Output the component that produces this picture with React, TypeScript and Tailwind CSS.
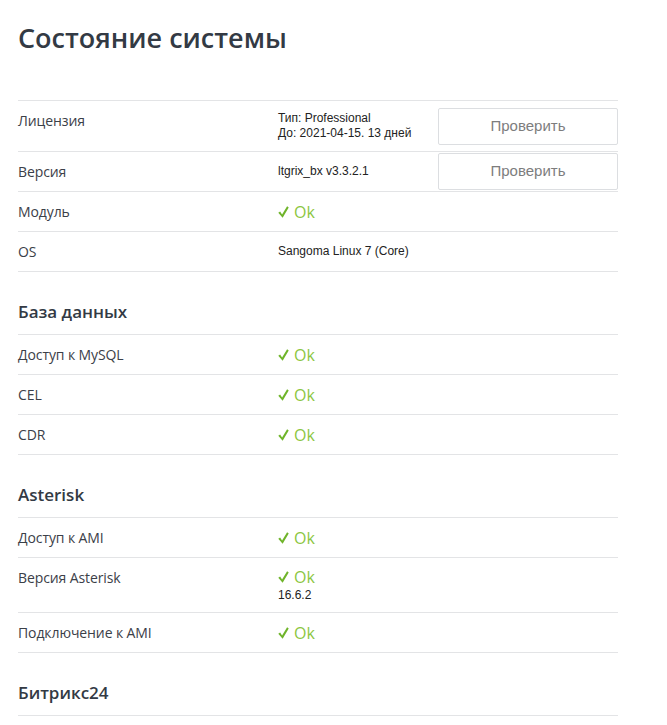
import React from "react";

const labelFont = { fontFamily: '"Open Sans", "Noto Sans", sans-serif' };

function Check() {
  return (
    <svg width="11" height="12" viewBox="0 0 10 11" className="mr-[5px] shrink-0">
      <path d="M0.2 6.3 L1.9 5.1 L3.7 7.7 L8.3 0.3 L9.8 1.3 L4.2 10.7 Z" fill="#6fb42a" />
    </svg>
  );
}

function Ok() {
  return (
    <div className="flex items-center h-5 text-[16px] leading-5 text-[#8cc63f]" style={labelFont}>
      <Check />
      <span>Ok</span>
    </div>
  );
}

function Row({
  label,
  children,
  button,
  valueClass = "py-[9px]",
}: {
  label: string;
  children: React.ReactNode;
  button?: boolean;
  valueClass?: string;
}) {
  return (
    <div className="flex min-h-[40px] border-b border-[#e3e4e6]">
      <div
        className="w-[260px] shrink-0 pt-[10px] pb-[9px] text-[14px] leading-5 text-[#3b4048] tracking-[-0.1px]"
        style={labelFont}
      >
        {label}
      </div>
      <div className={`w-[160px] shrink-0 self-center ${valueClass}`}>{children}</div>
      {button && (
        <div className="w-[180px] shrink-0 self-center">
          <button className="w-full h-[37px] border border-[#dcdee1] rounded-[2px] bg-white text-[15px] text-[#7d7d7d] font-['Liberation_Sans',Arial,sans-serif]">
            Проверить
          </button>
        </div>
      )}
    </div>
  );
}

function Val({ children }: { children: React.ReactNode }) {
  return (
    <div className="text-[12px] leading-[15px] text-[#222] font-['Liberation_Sans',Arial,sans-serif]">
      {children}
    </div>
  );
}

function Heading({ children }: { children: React.ReactNode }) {
  return (
    <div
      className="pt-[28px] pb-[10px] text-[17px] leading-6 font-semibold text-[#333a44] border-b border-[#e3e4e6]"
      style={labelFont}
    >
      {children}
    </div>
  );
}

export default function App() {
  return (
    <div className="bg-white min-h-[725px] pl-[18px]">
      <div className="w-[600px]">
        <h1
          className="pt-[20px] text-[27px] leading-[36px] font-semibold text-[#333a44]"
          style={labelFont}
        >
          Состояние системы
        </h1>
        <div className="mt-[44px] border-t border-[#e3e4e6]">
          <Row label="Лицензия" button valueClass="py-[10px]">
            <Val>
              Тип: Professional
              <br />
              До: 2021-04-15. 13 дней
            </Val>
          </Row>
          <Row label="Версия" button>
            <Val>ltgrix_bx v3.3.2.1</Val>
          </Row>
          <Row label="Модуль">
            <Ok />
          </Row>
          <Row label="OS">
            <Val>Sangoma Linux 7 (Core)</Val>
          </Row>
        </div>
        <Heading>База данных</Heading>
        <Row label="Доступ к MySQL">
          <Ok />
        </Row>
        <Row label="CEL">
          <Ok />
        </Row>
        <Row label="CDR">
          <Ok />
        </Row>
        <Heading>Asterisk</Heading>
        <Row label="Доступ к AMI">
          <Ok />
        </Row>
        <Row label="Версия Asterisk">
          <Ok />
          <div className="text-[12px] leading-4 text-[#222] font-['Liberation_Sans',Arial,sans-serif]">
            16.6.2
          </div>
        </Row>
        <Row label="Подключение к AMI">
          <Ok />
        </Row>
        <Heading>Битрикс24</Heading>
      </div>
    </div>
  );
}
